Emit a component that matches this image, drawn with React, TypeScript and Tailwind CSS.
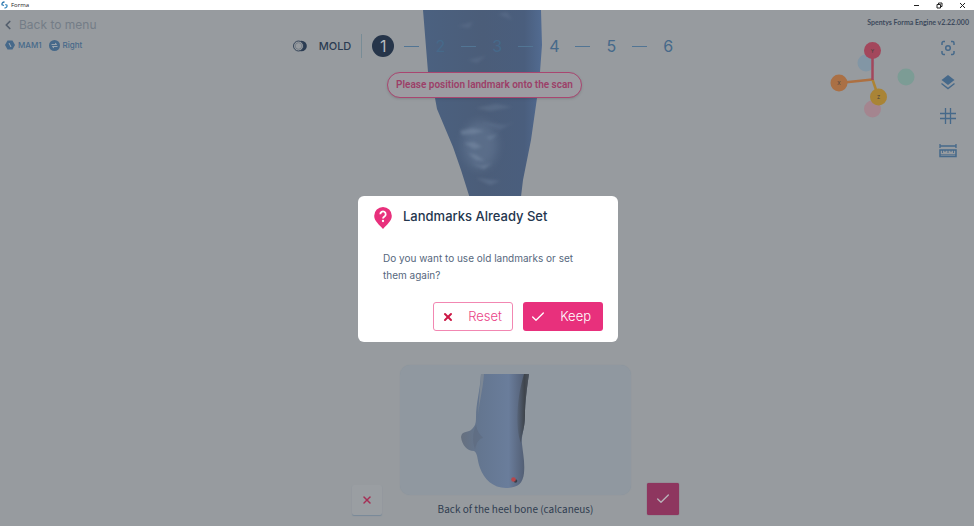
import { Check, ChevronLeft, X } from "lucide-react";

const steps = [1, 2, 3, 4, 5, 6];

function TitleBar() {
  return (
    <div className="flex h-[10px] items-center justify-between bg-white pl-px pr-2 text-[#222]">
      <div className="flex items-center gap-[3px]">
        <svg width="7" height="8" viewBox="0 0 14 16" fill="none" strokeWidth="2.6">
          <path d="M7 2C3 2 1.500 4.500 2 7.500L6 9" stroke="#2c77ae" />
          <path d="M7 14c4 0 5.500-2.500 5-5.500L8.500 7" stroke="#3c8cc0" />
        </svg>
        <span className="font-['Open_Sans',sans-serif] text-[6px] font-medium leading-[8px]">Forma</span>
      </div>
      <div className="flex items-center gap-4">
        <button aria-label="Minimize">
          <svg width="7" height="7" viewBox="0 0 7 7" stroke="currentColor">
            <path d="M1 3.500h5" />
          </svg>
        </button>
        <button aria-label="Restore">
          <svg width="7" height="7" viewBox="0 0 7 7" fill="none" stroke="currentColor">
            <path d="M1 2.500h3.500V6H1zM2.500 2V1H6v3.500H5" />
          </svg>
        </button>
        <button aria-label="Close">
          <svg width="7" height="7" viewBox="0 0 7 7" stroke="currentColor">
            <path d="M1 1l5 5M6 1L1 6" />
          </svg>
        </button>
      </div>
    </div>
  );
}

function LegScan() {
  return (
    <svg className="absolute left-1/2 top-0 -translate-x-1/2" width="130" height="195" viewBox="0 0 130 195">
      <defs>
        <linearGradient id="leg" x1="0" x2="1">
          <stop offset="0" stopColor="#4b6180" />
          <stop offset="0.5" stopColor="#4b5d79" />
          <stop offset="0.85" stopColor="#4a5e7d" />
          <stop offset="1" stopColor="#526b91" />
        </linearGradient>
        <filter id="glow" x="-50%" y="-50%" width="200%" height="200%">
          <feGaussianBlur stdDeviation="5" />
        </filter>
        <filter id="soft" x="-50%" y="-50%" width="200%" height="200%">
          <feGaussianBlur stdDeviation="1.5" />
        </filter>
      </defs>
      <path
        d="M1 0L6 62L13 88L15 99L31 137L39 160L50 195H98L101 170L109 130L115 88L118 62L120 35L119 0Z"
        fill="url(#leg)"
      />
      <ellipse cx="58" cy="135" rx="17" ry="24" fill="#6d819d" opacity="0.45" filter="url(#glow)" />
      <g filter="url(#soft)" fill="#7b8fa8">
        <path d="M38 121l12-3 12 3-10 3-12 1z" opacity="0.5" />
        <path d="M42 133l10-1 8 5-8 2zM46 143l8 2 9 6-9-1zM50 154l10 2 10-3-8 6z" opacity="0.5" />
        <path d="M64 127l12-3-8 6z" opacity="0.4" />
        <path d="M54 98l20-4 16 3-22 4z" opacity="0.25" />
        <path d="M60 112l24 3 8-3-14 8z" opacity="0.2" />
        <path d="M54 168l24 3-10 4z" opacity="0.3" />
        <path d="M36 16l15-4-4 6zM76 4l14 6-5-8zM46 50l18-4-9 7z" opacity="0.2" />
      </g>
    </svg>
  );
}

function Stepper() {
  return (
    <div className="flex items-center pr-[2px] text-[#46698a]">
      <svg width="14" height="12" viewBox="0 0 14 12" fill="none">
        <circle cx="8.500" cy="6" r="5.300" fill="#2b3c52" />
        <circle cx="5.500" cy="6" r="5" fill="#979b9f" stroke="#2b3c52" strokeWidth="0.900" />
        <circle cx="5.500" cy="6" r="3.300" stroke="#5f6b79" strokeWidth="0.600" />
      </svg>
      <span className="ml-3 text-[11px] font-medium leading-4 text-[#2b3c52]">MOLD</span>
      <span className="mx-[10px] h-6 w-px bg-[#788c96]" />
      <ol className="flex items-center gap-[10px]">
        {steps.map((step) => (
          <li key={step} className="flex items-center gap-[10px]">
            {step > 1 && <span className="h-px w-[15px] bg-[#527594]" />}
            <button
              className={
                step === 1
                  ? "size-[22px] rounded-full bg-[#26354a] text-[16px] leading-[22px] text-[#b5babf]"
                  : "size-[22px] text-[16px] leading-[22px]"
              }
            >
              {step}
            </button>
          </li>
        ))}
      </ol>
    </div>
  );
}

function AxisGizmo() {
  return (
    <svg width="86" height="80" viewBox="0 0 86 80" fontSize="5" textAnchor="middle">
      <circle cx="36" cy="22" r="8.500" fill="#8296a5" />
      <circle cx="76" cy="36" r="8.500" fill="#7c9c95" />
      <circle cx="42.500" cy="68" r="8.500" fill="#a4858f" />
      <path d="M42.500 38.500L9 42" stroke="#ad7041" strokeWidth="2.500" />
      <path d="M42.500 38.500L48.500 56" stroke="#ad8333" strokeWidth="2.500" />
      <path d="M42.500 39V10" stroke="#a3475c" strokeWidth="2.500" />
      <circle cx="42.500" cy="9.500" r="8.500" fill="#a3475c" />
      <circle cx="9" cy="42" r="8.500" fill="#aa7045" />
      <circle cx="48.500" cy="56" r="8.500" fill="#a98436" />
      <g fill="#44403f">
        <text x="42.500" y="11.500">Y</text>
        <text x="9" y="44">X</text>
        <text x="48.500" y="58">Z</text>
      </g>
    </svg>
  );
}

function Toolbar() {
  return (
    <div className="flex flex-col items-center gap-4 text-[#46698a]">
      <button aria-label="Center view">
        <svg width="18" height="18" viewBox="0 0 18 18" fill="none" stroke="currentColor" strokeWidth="1.500">
          <path d="M3 6V4a1.500 1.500 0 0 1 1.500-1.500H6M12 2.500h1.500A1.500 1.500 0 0 1 15 4v2M15 12v2a1.500 1.500 0 0 1-1.500 1.500H12M6 15.500H4.500A1.500 1.500 0 0 1 3 14v-2" />
          <circle cx="9" cy="9" r="2.300" />
        </svg>
      </button>
      <button aria-label="Layers">
        <svg width="18" height="18" viewBox="0 0 18 18" fill="none">
          <path d="M9 2l6.500 5L9 12 2.500 7z" fill="currentColor" />
          <path d="M2.500 10.500L9 15.500l6.500-5" stroke="currentColor" strokeWidth="1.400" />
        </svg>
      </button>
      <button aria-label="Grid">
        <svg width="18" height="18" viewBox="0 0 18 18" stroke="currentColor" strokeWidth="1.300">
          <path d="M6.500 1v16M11.500 1v16M1 6.500h16M1 11.500h16" />
        </svg>
      </button>
      <button aria-label="Measure">
        <svg width="18" height="18" viewBox="0 0 18 18" fill="none" stroke="currentColor">
          <path d="M1 3v4M17 3v4M1 5h16" strokeWidth="1.300" />
          <path d="M1 9h16v6.500H1z" strokeWidth="1.500" />
          <path d="M3.500 9v3M6 9v2M9 9v3M12 9v2M14.500 9v3M1 13.800h16" strokeWidth="0.900" />
        </svg>
      </button>
    </div>
  );
}

function HeelPicture() {
  return (
    <svg
      className="mx-auto"
      width="231"
      height="130"
      viewBox="0 0 231 130"
      role="img"
      aria-label="Heel seen from behind"
    >
      <defs>
        <linearGradient id="heel" x1="0" x2="1">
          <stop offset="0" stopColor="#66707f" />
          <stop offset="0.280" stopColor="#647690" />
          <stop offset="0.700" stopColor="#6a7d9b" />
          <stop offset="0.900" stopColor="#56637a" />
          <stop offset="1" stopColor="#4a5461" />
        </linearGradient>
        <linearGradient id="shade" x1="0" x2="1">
          <stop offset="0" stopColor="#566378" />
          <stop offset="0.600" stopColor="#3f454d" />
          <stop offset="1" stopColor="#4b525b" />
        </linearGradient>
      </defs>
      <path
        d="M81 9H129C127 22 125 38 125 50C125 64 121 70 122 79C123 89 125 97 124 108C123 119 117 123 106 123C93 123 84 114 80 103C77 95 78 88 74 86C67 86 62 80 61 72C62 65 69 68 72 64C75 61 76 59 76 52C76 38 80 26 81 9Z"
        fill="url(#heel)"
      />
      <path d="M124 9H129C127 22 125 38 125 50C125 64 121 70 121 78C115 62 117 32 124 9Z" fill="url(#shade)" />
      <path d="M81 9H84C83 26 78 40 78 56C78 42 80 26 81 9Z" fill="#7c8794" />
      <path d="M76 60C77 66 80 70 83 73C79 73 76 79 75 84C72 76 73 67 76 60Z" fill="#5c687c" opacity="0.500" />
      <circle cx="115.500" cy="116" r="1.800" fill="#3a3e47" />
      <circle cx="113.500" cy="114.500" r="2.300" fill="#b5464b" />
    </svg>
  );
}

function LandmarksDialog() {
  return (
    <div
      role="dialog"
      aria-labelledby="dialog-title"
      className="w-[260px] rounded-[6px] bg-white pb-[11px] pl-4 pr-[15px] pt-[11px]"
    >
      <div className="flex items-start gap-[11px]">
        <svg width="18" height="22" viewBox="0 0 18 22" fill="none">
          <path d="M9 0a8.800 8.800 0 0 0-8.800 8.800C.2 14 5 17.500 9 22c4-4.500 8.800-8 8.800-13.200A8.800 8.800 0 0 0 9 0z" fill="#e8307c" />
          <path d="M6.300 7.200a2.700 2.700 0 1 1 4.100 2.300c-.9.600-1.400 1-1.400 2" stroke="#fff" strokeWidth="1.800" />
          <circle cx="9" cy="14" r="1.150" fill="#fff" />
        </svg>
        <h2 id="dialog-title" className="text-[13px] font-medium leading-[18px] text-[#24364e]">
          Landmarks Already Set
        </h2>
      </div>
      <p className="mt-[21px] px-[9px] text-[10px] leading-[17px] text-[#56677d]">
        Do you want to use old landmarks or set them again?
      </p>
      <div className="mt-[18px] flex justify-end gap-[10px] text-[13px] font-light">
        <button className="flex h-[29px] w-[80px] items-center justify-between rounded-[3px] border border-[#f287b2] pl-2 pr-[10px] text-[#ea4589]">
          <X className="size-3 text-[#cc1745]" strokeWidth={4} />
          Reset
        </button>
        <button className="flex h-[29px] w-[80px] items-center justify-between rounded-[3px] bg-[#e8307c] pl-[7px] pr-3 text-white">
          <Check className="size-4 text-white" />
          Keep
        </button>
      </div>
    </div>
  );
}

export default function App() {
  return (
    <div className="flex min-h-screen flex-col bg-[#979b9f] font-['Inter',sans-serif]">
      <TitleBar />
      <main className="relative flex flex-1 flex-col justify-between">
        <LegScan />

        <header className="relative grid grid-cols-[1fr_auto_1fr] px-[5px]">
          <div className="pt-[6px]">
            <a href="#menu" className="flex items-center gap-1 text-[12px] leading-[18px] text-[#747d87]">
              <ChevronLeft className="-ml-1 size-[14px] text-[#535e6c]" strokeWidth={3} />
              Back to menu
            </a>
            <div className="mt-1 flex items-center gap-[7px] text-[8px] font-medium leading-[14px] text-[#46698a]">
              <span className="flex items-center gap-[3px]">
                <svg width="10" height="10" viewBox="0 0 10 10">
                  <path d="M2.500 0.500h5L10 5 7.500 9.500h-5L0 5z" fill="currentColor" />
                  <path d="M4 3l2 4" stroke="#a4abb2" />
                </svg>
                MAM1
              </span>
              <span className="flex items-center gap-[3px]">
                <svg width="11" height="11" viewBox="0 0 11 11">
                  <circle cx="5.500" cy="5.500" r="5.500" fill="currentColor" />
                  <path d="M2.500 4.500h5M6 3l1.800 1.500M8.500 6.500h-5M5 8L3.200 6.500" stroke="#a4abb2" fill="none" strokeWidth="0.900" />
                </svg>
                Right
              </span>
            </div>
          </div>

          <div className="flex flex-col items-center pt-6">
            <Stepper />
            <p className="mr-[5px] mt-[14px] rounded-full border border-[#a94670] bg-[#9d9ca2] px-2 font-['Roboto',sans-serif] text-[10px] font-semibold leading-6 text-[#9c3f68] shadow-sm">
              Please position landmark onto the scan
            </p>
          </div>

          <div className="flex flex-col items-end pt-[7px]">
            <span className="font-['Lato',sans-serif] text-[7px] font-bold leading-[10px] text-[#3d4a5c]">
              Spentys Forma Engine v2.22.000
            </span>
            <div className="mt-3 flex gap-[23px] pr-3">
              <div className="pt-[2px]">
                <AxisGizmo />
              </div>
              <Toolbar />
            </div>
          </div>
        </header>

        <section className="flex items-end justify-center pb-[9px] pl-[57px]">
          <button
            aria-label="Cancel"
            className="mb-[2px] grid h-[30px] w-[30px] place-items-center rounded-[2px] bg-[#9a9ea2] shadow-[0_1px_1px_#778998]"
          >
            <X className="size-3 text-[#a52e55]" strokeWidth={3} />
          </button>
          <figure className="ml-[18px] mr-4">
            <div className="w-[231px] rounded-[10px] bg-[#9098a0] shadow-[0_0_1px_#84919c]">
              <HeelPicture />
            </div>
            <figcaption className="mt-[6px] text-center font-['Noto_Sans_CJK_JP',sans-serif] text-[10px] leading-4 text-[#2f3d50]">
              Back of the heel bone (calcaneus)
            </figcaption>
          </figure>
          <button
            aria-label="Confirm"
            className="mb-[2px] grid size-8 place-items-center rounded-[2px] bg-[#8e365f] shadow-[0_0_1px_#7b2c50]"
          >
            <Check className="size-4 text-[#b9b3ba]" />
          </button>
        </section>

        <div className="absolute inset-0 flex items-center justify-center pl-0.5 pt-0.5">
          <LandmarksDialog />
        </div>
      </main>
    </div>
  );
}
